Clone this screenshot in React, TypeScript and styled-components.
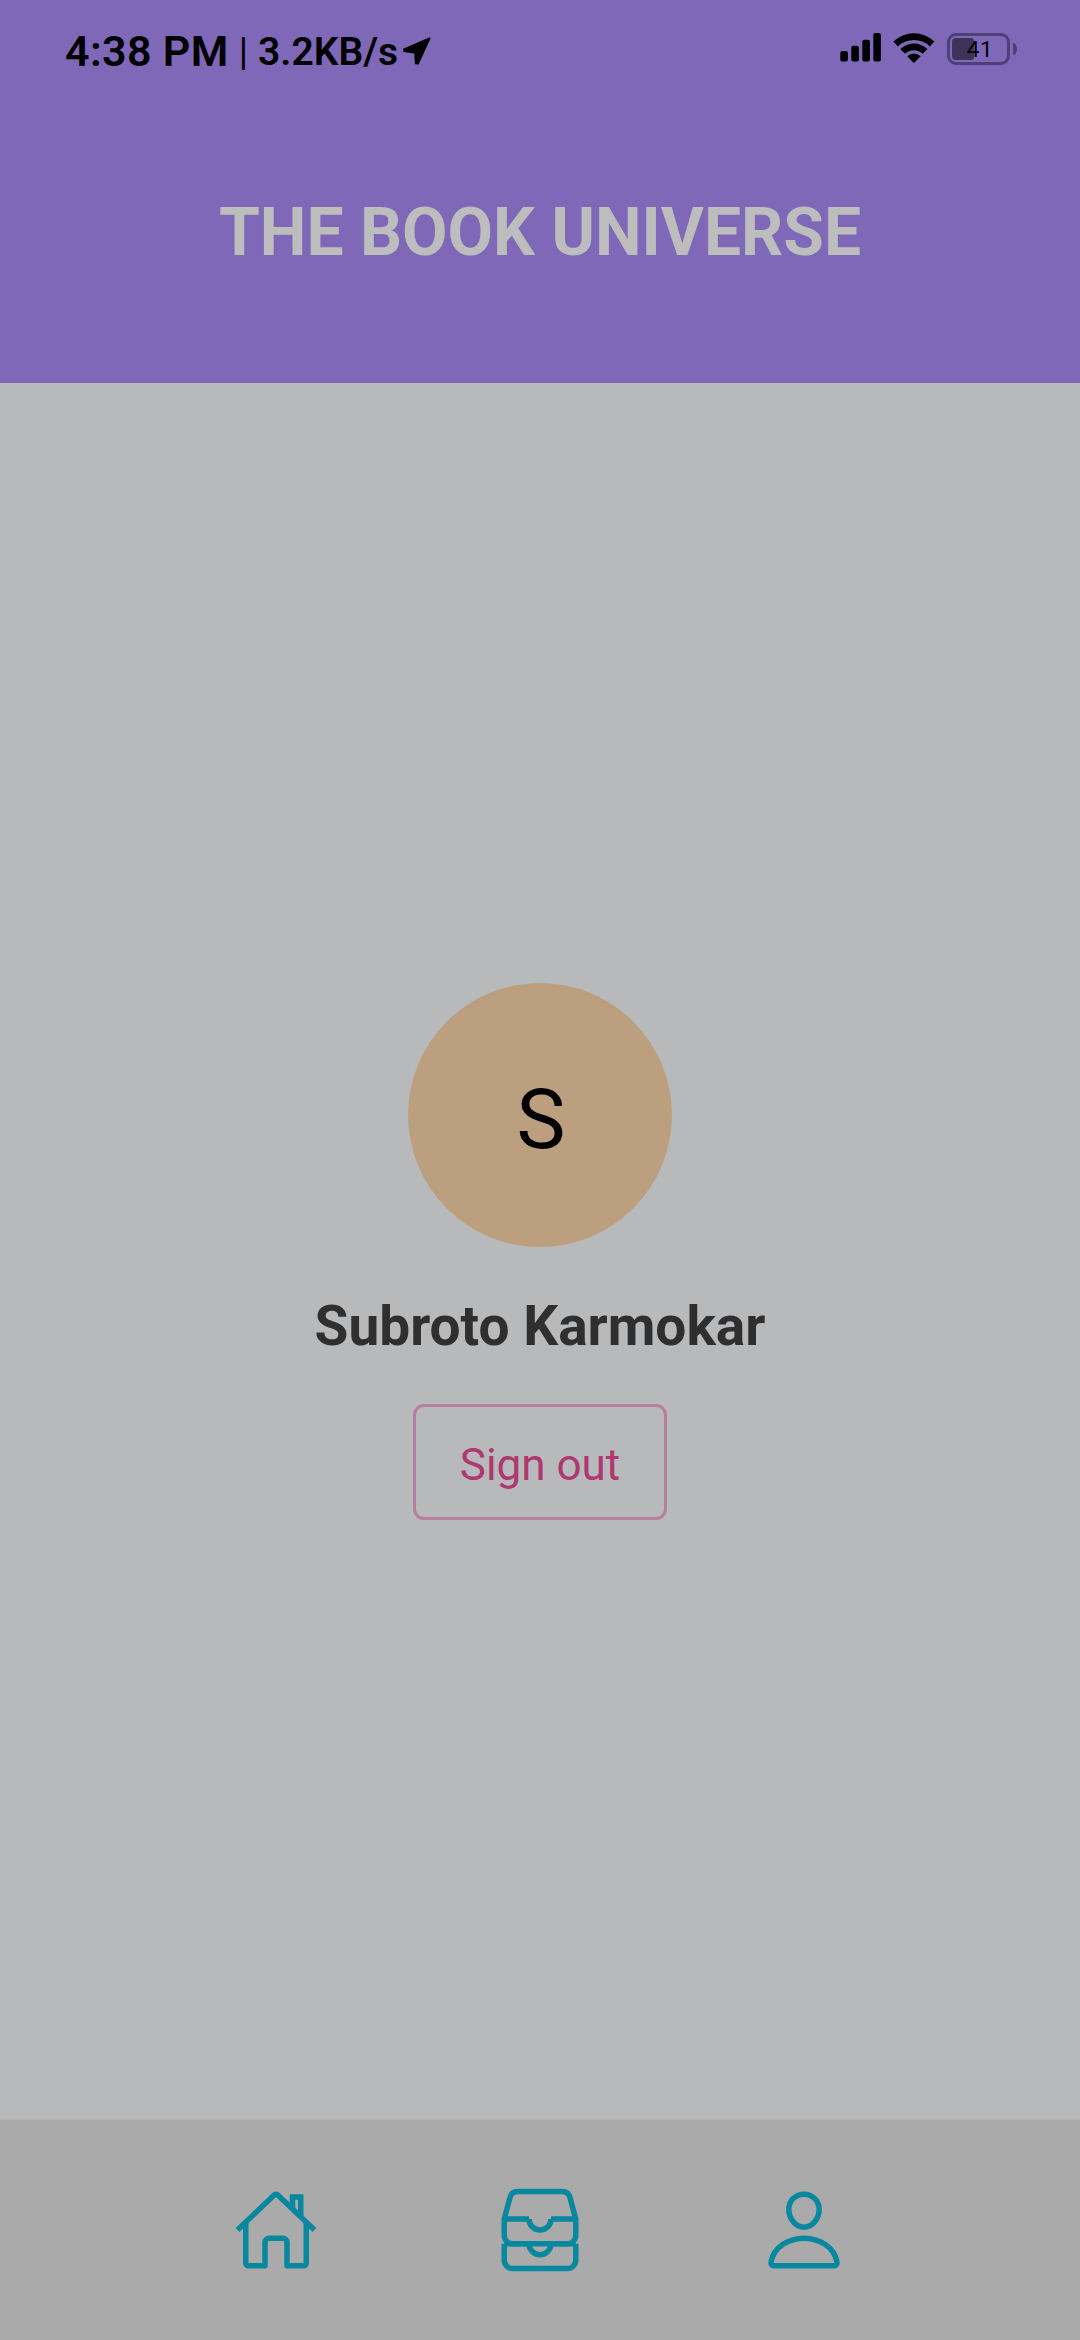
import React from "react";
import styled, { createGlobalStyle } from "styled-components";

const GlobalStyle = createGlobalStyle`
  *, *::before, *::after {
    box-sizing: border-box;
  }
  body {
    margin: 0;
    background: #b8b9bb;
    font-family: Roboto, "Liberation Sans", sans-serif;
  }
`;

const Screen = styled.div`
  display: flex;
  flex-direction: column;
  width: 100%;
  height: 2340px;
  background: #b8b9bb;
`;

const Header = styled.header`
  display: flex;
  flex-direction: column;
  align-items: center;
  flex: none;
  height: 383px;
  background: #7e68b7;
`;

const StatusBar = styled.div`
  display: flex;
  align-items: center;
  justify-content: space-between;
  width: 100%;
  height: 102px;
  padding: 0 63px 0 65px;
  color: #000;
`;

const StatusGroup = styled.div`
  display: flex;
  align-items: center;
`;

const Clock = styled.span`
  font-size: 43px;
  font-weight: 600;
  line-height: 50px;
  letter-spacing: 0.35px;
`;

const Divider = styled.span`
  margin-left: 10px;
  padding-top: 2px;
  font-size: 38px;
  line-height: 44px;
`;

const Speed = styled.span`
  margin-left: 10px;
  padding-top: 2px;
  font-size: 39px;
  font-weight: 600;
  line-height: 46px;
`;

const LocationArrow = styled.svg`
  width: 30px;
  height: 30px;
  margin-left: 4px;
`;

const Indicators = styled.div`
  display: flex;
  align-items: flex-start;
  padding-bottom: 4px;
`;

const SignalBars = styled.svg`
  width: 41px;
  height: 29px;
`;

const WifiMark = styled.svg`
  width: 42px;
  height: 31px;
  margin: 0 12px;
`;

const Battery = styled.div`
  display: flex;
  align-items: center;
  gap: 3px;
`;

const BatteryShell = styled.div`
  position: relative;
  width: 63px;
  height: 32px;
  padding: 2px;
  border: 3px solid #503f79;
  border-radius: 9px;
`;

const BatteryCharge = styled.div<{ $level: number }>`
  width: ${({ $level }) => $level}%;
  height: 22px;
  border-radius: 4px 3px 3px 4px;
  background: #3f325b;
`;

const BatteryLabel = styled.span`
  position: absolute;
  inset: 0;
  display: flex;
  align-items: center;
  justify-content: center;
  padding: 1px 0 0 3px;
  font-size: 22.5px;
  line-height: 25px;
  letter-spacing: 0.5px;
`;

const BatteryTip = styled.div`
  width: 4px;
  height: 12px;
  border-radius: 0 4px 4px 0 / 0 6px 6px 0;
  background: #503f79;
`;

const Title = styled.h1`
  margin: 92px 0 0;
  color: #bdbdbd;
  font-size: 66px;
  font-weight: 700;
  line-height: 77px;
`;

const Profile = styled.main`
  display: flex;
  flex: 1;
  flex-direction: column;
  align-items: center;
  justify-content: center;
`;

const Avatar = styled.div`
  display: flex;
  align-items: center;
  justify-content: center;
  width: 264px;
  height: 264px;
  padding: 9px 0 0 2px;
  border-radius: 50%;
  background: #bc9f7f;
  color: #000;
  font-size: 82.5px;
  line-height: 97px;
`;

const Name = styled.h2`
  margin: 47px 0 46px;
  color: #2f2f2f;
  font-size: 55px;
  font-weight: 700;
  line-height: 64px;
`;

const SignOutButton = styled.button`
  display: flex;
  align-items: center;
  justify-content: center;
  width: 254px;
  height: 116px;
  padding: 6px 0 0;
  border: 3px solid #b77f9d;
  border-radius: 11px;
  background: transparent;
  color: #ae386f;
  font-family: inherit;
  font-size: 44px;
  line-height: 52px;
`;

const TabBar = styled.nav`
  display: flex;
  flex: none;
  height: 220px;
  padding: 0 144px;
  background: #aaaaaa;
  box-shadow: 0 -1px 2px rgba(0, 0, 0, 0.05);
`;

const Tab = styled.a`
  display: flex;
  flex: 1;
  align-items: flex-start;
  justify-content: center;
  padding-top: 66px;
  color: #07889f;
`;

const TabIcon = styled.svg`
  width: 88px;
  height: 88px;
  fill: none;
  stroke: currentColor;
  stroke-width: 32;
`;

const Stroke = styled.path<{ $sharp?: boolean }>`
  stroke-linejoin: ${({ $sharp }) => ($sharp ? "miter" : "round")};
`;

const tabs = [
  {
    label: "Home",
    strokes: [
      { d: "M80 212v236a16 16 0 0016 16h96V328a24 24 0 0124-24h80a24 24 0 0124 24v136h96a16 16 0 0016-16V212" },
      { d: "M480 256L266.89 52c-5-5.28-16.69-5.34-21.78 0L32 256" },
      { d: "M400 179V64h-48v69", sharp: true },
    ],
  },
  {
    label: "Library",
    strokes: [
      {
        d: "M384 32H128c-26 0-43 14-48 40L48 192v96a48.14 48.14 0 0048 48h320a48.14 48.14 0 0048-48v-96L432 72c-5-27-23-40-48-40z",
      },
      { d: "M48 192h144M320 192h144M192 192a64 64 0 00128 0" },
      { d: "M464 336v96a48.14 48.14 0 01-48 48H96a48.14 48.14 0 01-48-48v-96" },
      { d: "M48 336h144M320 336h144M192 336a64 64 0 00128 0" },
    ],
  },
  {
    label: "Profile",
    strokes: [
      { d: "M344 144c-3.92 52.87-44 96-88 96s-84.15-43.12-88-96c-4-55 35-96 88-96s92 42 88 96z" },
      {
        d: "M256 304c-87 0-175.3 48-191.64 138.6C62.39 453.52 68.57 464 80 464h352c11.44 0 17.62-10.48 15.65-21.4C431.3 352 343 304 256 304z",
      },
    ],
  },
] as { label: string; strokes: { d: string; sharp?: boolean }[] }[];

export default function App() {
  return (
    <>
      <GlobalStyle />
      <Screen>
        <Header>
          <StatusBar>
            <StatusGroup>
              <Clock>4:38 PM</Clock>
              <Divider>|</Divider>
              <Speed>3.2KB/s</Speed>
              <LocationArrow viewBox="0 0 30 30">
                <path
                  d="M2 13.5L27.5 2.3L16 27.5L13.8 27.2L13.3 16.8L2.2 15Z"
                  fill="#000"
                  stroke="#000"
                  strokeWidth="2"
                  strokeLinejoin="round"
                />
              </LocationArrow>
            </StatusGroup>
            <Indicators>
              <SignalBars viewBox="0 0 41 29">
                <rect x="0.3" y="18" width="7.6" height="10.4" rx="2" />
                <rect x="11.3" y="12.8" width="7.6" height="15.6" rx="2" />
                <rect x="22.3" y="6.8" width="7.6" height="21.6" rx="2" />
                <rect x="33.3" y="0" width="7.6" height="28.4" rx="2" />
              </SignalBars>
              <WifiMark viewBox="0 0 42 31">
                <path d="M0.4 8.6A29.5 29.5 0 0 1 41.4 8.6L36.8 13.4A22.8 22.8 0 0 0 5 13.4Z" />
                <path d="M7.4 16A19.4 19.4 0 0 1 34.4 16L29.8 20.8A12.8 12.8 0 0 0 12 20.8Z" />
                <path d="M14.2 23.2A9.8 9.8 0 0 1 27.6 23.2L21.8 29.2Q20.9 30 20 29.2Z" />
              </WifiMark>
              <Battery>
                <BatteryShell>
                  <BatteryCharge $level={41} />
                  <BatteryLabel>41</BatteryLabel>
                </BatteryShell>
                <BatteryTip />
              </Battery>
            </Indicators>
          </StatusBar>
          <Title>THE BOOK UNIVERSE</Title>
        </Header>
        <Profile>
          <Avatar>S</Avatar>
          <Name>Subroto Karmokar</Name>
          <SignOutButton>Sign out</SignOutButton>
        </Profile>
        <TabBar>
          {tabs.map(({ label, strokes }) => (
            <Tab key={label} aria-label={label}>
              <TabIcon viewBox="0 0 512 512">
                {strokes.map(({ d, sharp }) => (
                  <Stroke key={d} d={d} $sharp={sharp} />
                ))}
              </TabIcon>
            </Tab>
          ))}
        </TabBar>
      </Screen>
    </>
  );
}
